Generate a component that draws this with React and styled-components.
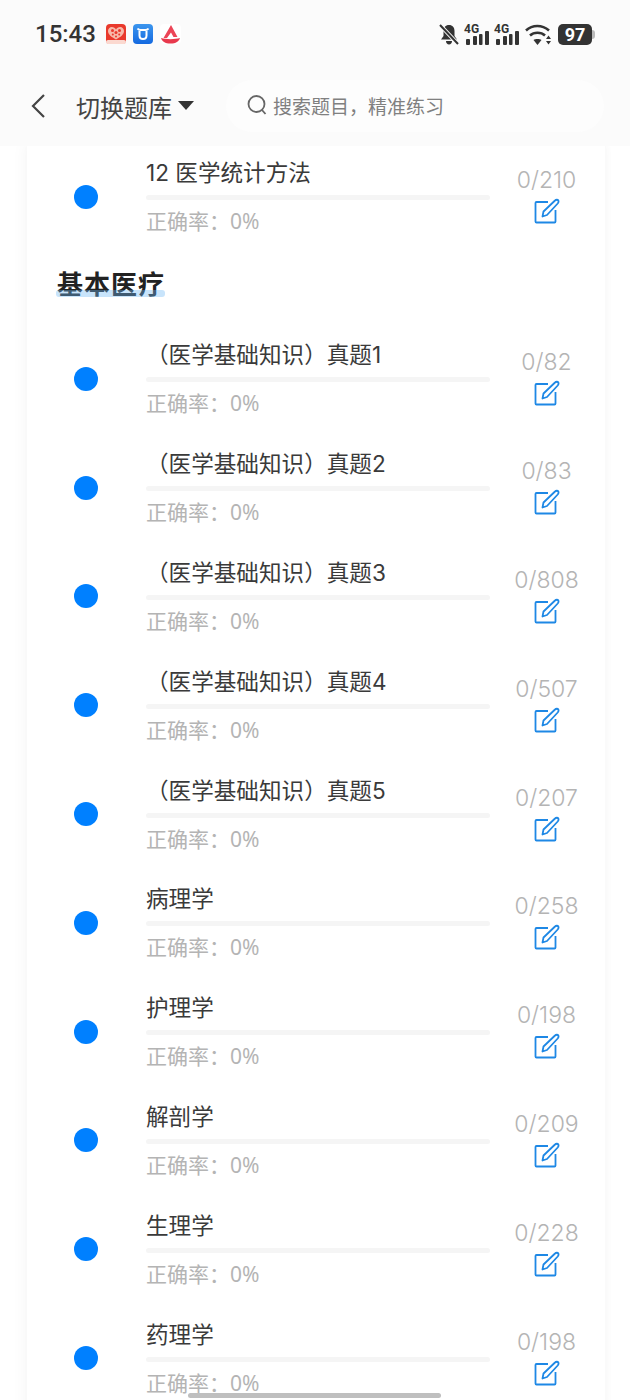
import React from "react";
import styled, { createGlobalStyle } from "styled-components";

const FONT = `Inter, "Noto Sans CJK SC", sans-serif`;

const GlobalStyle = createGlobalStyle`
  html, body {
    margin: 0;
    padding: 0;
    background: #fff;
    font-family: ${FONT};
  }
`;

const Page = styled.div`
  position: relative;
  width: 630px;
  height: 1400px;
  overflow: hidden;
  background: #fff;
`;

const Top = styled.header`
  position: relative;
  z-index: 2;
  height: 146px;
  background: #fbfbfb;
`;

const StatusBar = styled.div`
  height: 68px;
  display: flex;
  align-items: center;
  padding: 0 38px 0 35px;
`;

const Clock = styled.span`
  font-family: Roboto, sans-serif;
  font-size: 24px;
  font-weight: 500;
  color: #333;
  margin-right: 10px;
`;

const AppIcons = styled.div`
  display: flex;
  gap: 7px;
`;

const StatusIcons = styled.div`
  margin-left: auto;
  display: flex;
  align-items: center;
  gap: 6px;
`;

const Signal = styled.div`
  position: relative;
  width: 24px;
  height: 21px;
`;

const SignalLabel = styled.span`
  position: absolute;
  left: -1px;
  top: -1px;
  font-family: Roboto, sans-serif;
  font-size: 12px;
  font-weight: 700;
  line-height: 12px;
  color: #333;
`;

const Battery = styled.div`
  position: relative;
  width: 34px;
  height: 21px;
  border-radius: 5px;
  background: #333;
  color: #fff;
  font-family: Roboto, sans-serif;
  font-size: 18px;
  font-weight: 700;
  line-height: 21px;
  text-align: center;

  &::after {
    content: "";
    position: absolute;
    right: -3px;
    top: 6px;
    width: 3px;
    height: 9px;
    border-radius: 0 3px 3px 0;
    background: #bbb;
  }
`;

const NavBar = styled.div`
  display: flex;
  align-items: center;
  height: 52px;
  margin-top: 12px;
  padding: 0 26px 0 30px;
`;

const BackButton = styled.div`
  display: flex;
  width: 46px;
`;

const Switcher = styled.div`
  display: flex;
  align-items: center;
  width: 150px;
  font-size: 24px;
  color: #444;
`;

const Caret = styled.span`
  width: 0;
  height: 0;
  margin: 0 0 2px 6px;
  border-left: 8px solid transparent;
  border-right: 8px solid transparent;
  border-top: 9px solid #333;
`;

const SearchBox = styled.div`
  flex: 1;
  height: 52px;
  display: flex;
  align-items: center;
  gap: 6px;
  padding: 0 0 2px 21px;
  box-sizing: border-box;
  border-radius: 26px;
  background: #fdfdfd;
  color: #808080;
  font-size: 19px;
`;

const Card = styled.main`
  margin: -3.5px 25px 0 27px;
  background: #fff;
  box-shadow: -3px 0 14px rgba(0, 0, 0, 0.035), 2px 0 8px rgba(0, 0, 0, 0.025);
`;

const Row = styled.div`
  display: flex;
  align-items: center;
  height: 108.8px;
  padding-left: 47px;
`;

const Dot = styled.span`
  flex: none;
  width: 24px;
  height: 24px;
  border-radius: 50%;
  background: #0080ff;
  margin-right: 48px;
`;

const RowBody = styled.div`
  flex: none;
  width: 344px;
  padding-top: 1px;
`;

const RowTitle = styled.div`
  font-size: 22.6px;
  line-height: 30px;
  color: #3a3a3a;
  margin-bottom: 7px;
`;

const Bar = styled.div`
  height: 5px;
  border-radius: 3px;
  background: #f5f5f5;
`;

const Accuracy = styled.div`
  font-family: "Noto Sans", "Noto Sans CJK SC", sans-serif;
  font-size: 21px;
  line-height: 30px;
  color: #b4b4b4;
  margin-top: 6px;
`;

const Progress = styled.div`
  flex: 1;
  display: flex;
  flex-direction: column;
  align-items: center;
  gap: 4px;
  padding: 0 2px 3px 0;
`;

const Count = styled.span`
  font-size: 23px;
  font-weight: 300;
  line-height: 28px;
  color: #b4b4b4;
`;

const Section = styled.div`
  height: 73.2px;
  box-sizing: border-box;
  display: flex;
  align-items: center;
  padding: 0 0 6px 30px;
`;

const SectionName = styled.h2`
  position: relative;
  margin: 0;
  font-size: 26px;
  line-height: 26px;
  font-weight: 700;
  letter-spacing: 1px;
  color: #222;

  /* marker stroke laid over the lower part of the letters */
  &::after {
    content: "";
    position: absolute;
    left: -1px;
    right: 0;
    bottom: 1px;
    height: 7px;
    border-radius: 3px;
    background: rgba(110, 185, 245, 0.38);
  }
`;

const HomeBar = styled.div`
  position: absolute;
  left: 188px;
  bottom: 2px;
  width: 253px;
  height: 5px;
  border-radius: 3px;
  background: #bfbfbf;
`;

const BellOff = () => (
  <svg width="20" height="21" viewBox="0 0 20 21">
    <path d="M10 1C6.500 1 4.500 3.500 4.500 7v5L2 15.500h16L15.500 12V7C15.500 3.500 13.500 1 10 1z" fill="#333" />
    <path d="M7 17h6c0 2-1.300 3.500-3 3.500S7 19 7 17z" fill="#333" />
    <path d="M1 1l18 19" stroke="#fbfbfb" strokeWidth="4" />
    <path d="M1 1l18 19" stroke="#333" strokeWidth="2" />
  </svg>
);

const SignalBars = () => (
  <svg width="24" height="21" viewBox="0 0 24 21" style={{ display: "block" }}>
    <rect x="1" y="15" width="4" height="6" rx="1" fill="#333" />
    <rect x="8" y="12" width="4" height="9" rx="1" fill="#333" />
    <rect x="14" y="10" width="3.500" height="11" rx="1" fill="#333" />
    <rect x="20" y="7" width="4" height="14" rx="1" fill="#333" />
  </svg>
);

const Wifi = () => (
  <svg width="27" height="21" viewBox="0 0 27 21" fill="none" stroke="#333" strokeWidth="2.600">
    <path d="M1 6.500c6.500-6 16-6 23 0" />
    <path d="M5 11.500c4-3.600 11-3.600 15 0" />
    <path d="M12.500 21l-4-5c2-1.400 6-1.400 8 0z" fill="#333" stroke="none" />
    <path d="M23.500 11.500l-2.500 3.500h5z M23.500 20.500l-2.500-3.500h5z" fill="#333" stroke="none" />
  </svg>
);

const HeartApp = () => (
  <svg width="20" height="20" viewBox="0 0 20 20">
    <rect width="20" height="20" rx="4" fill="#e9392c" />
    <rect y="16" width="20" height="4" rx="2" fill="#fbd9d0" />
    <path d="M10 15.500C5.500 13 2 10.500 2 7 2 4.700 3.700 3 5.800 3 7.700 3 9.200 4 10 5.500 10.800 4 12.300 3 14.200 3 16.300 3 18 4.700 18 7 18 10.500 14.500 13 10 15.500z" fill="#f7b9aa" />
    <circle cx="6.500" cy="6.500" r="1.500" fill="#e9392c" />
    <circle cx="13.500" cy="6.500" r="1.500" fill="#e9392c" />
    <circle cx="10" cy="8.500" r="1.500" fill="#e9392c" />
    <circle cx="6.800" cy="10.500" r="1" fill="#e9392c" />
    <circle cx="13.200" cy="10.500" r="1" fill="#e9392c" />
    <circle cx="10" cy="12.500" r="1" fill="#e9392c" />
  </svg>
);

const BlueApp = () => (
  <svg width="20" height="20" viewBox="0 0 20 20">
    <defs>
      <linearGradient id="blueTile" x1="0" y1="0" x2="0" y2="1">
        <stop offset="0" stopColor="#3c96ee" />
        <stop offset="1" stopColor="#1469e0" />
      </linearGradient>
    </defs>
    <rect width="20" height="20" rx="4" fill="url(#blueTile)" />
    <path d="M4.500 4.500c1 1.300 2 1.500 3 1.500h5c1 0 2-.2 3-1.500 M6.500 6v5.500c0 2 1.500 3.500 3.500 3.500s3.500-1.500 3.500-3.500V6" fill="none" stroke="#fff" strokeWidth="2" />
  </svg>
);

const PeakApp = () => (
  <svg width="21" height="20" viewBox="0 0 21 20">
    <rect width="21" height="20" rx="4" fill="#fff" />
    <path d="M11 1l6.500 12h-4L11 8.500 7 14H3.500z" fill="#ec4557" />
    <path d="M1 14c5 1.500 14 1.500 19 0-1 3.500-4 5.500-9.500 5.500S2 17.500 1 14z" fill="#e8394d" />
  </svg>
);

const BackArrow = () => (
  <svg width="16" height="26" viewBox="0 0 16 26" fill="none" stroke="#444" strokeWidth="2.200">
    <path d="M14 2L3 13l11 11" />
  </svg>
);

const SearchIcon = () => (
  <svg width="20" height="22" viewBox="0 0 20 22" fill="none" stroke="#666" strokeWidth="1.800">
    <circle cx="9.500" cy="10" r="8" />
    <path d="M15 16l3.500 4" />
  </svg>
);

const EditIcon = () => (
  <svg width="26" height="26" viewBox="0 0 26 26" fill="none" stroke="#1e88e5" strokeWidth="1.800" strokeLinejoin="round">
    <path d="M14 4H2.500a1 1 0 0 0-1 1v18.500a1 1 0 0 0 1 1H20.500a1 1 0 0 0 1-1V12" />
    <path d="M8.500 18.500l1-5L21 2.500c1-1 2.800-1 3.300 0 .5 1 .2 2-.6 3L13 17z" />
  </svg>
);

const Question = ({ title, count }) => (
  <Row>
    <Dot />
    <RowBody>
      <RowTitle>{title}</RowTitle>
      <Bar />
      <Accuracy>正确率：0%</Accuracy>
    </RowBody>
    <Progress>
      <Count>{count}</Count>
      <EditIcon />
    </Progress>
  </Row>
);

const basics = [
  ["（医学基础知识）真题1", "0/82"],
  ["（医学基础知识）真题2", "0/83"],
  ["（医学基础知识）真题3", "0/808"],
  ["（医学基础知识）真题4", "0/507"],
  ["（医学基础知识）真题5", "0/207"],
  ["病理学", "0/258"],
  ["护理学", "0/198"],
  ["解剖学", "0/209"],
  ["生理学", "0/228"],
  ["药理学", "0/198"],
];

export default function App() {
  return (
    <Page>
      <GlobalStyle />
      <Top>
        <StatusBar>
          <Clock>15:43</Clock>
          <AppIcons>
            <HeartApp />
            <BlueApp />
            <PeakApp />
          </AppIcons>
          <StatusIcons>
            <BellOff />
            <Signal>
              <SignalLabel>4G</SignalLabel>
              <SignalBars />
            </Signal>
            <Signal>
              <SignalLabel>4G</SignalLabel>
              <SignalBars />
            </Signal>
            <Wifi />
            <Battery>97</Battery>
          </StatusIcons>
        </StatusBar>
        <NavBar>
          <BackButton>
            <BackArrow />
          </BackButton>
          <Switcher>
            切换题库
            <Caret />
          </Switcher>
          <SearchBox>
            <SearchIcon />
            搜索题目，精准练习
          </SearchBox>
        </NavBar>
      </Top>
      <Card>
        <Question title="12 医学统计方法" count="0/210" />
        <Section>
          <SectionName>基本医疗</SectionName>
        </Section>
        {basics.map(([title, count]) => (
          <Question key={title} title={title} count={count} />
        ))}
      </Card>
      <HomeBar />
    </Page>
  );
}
